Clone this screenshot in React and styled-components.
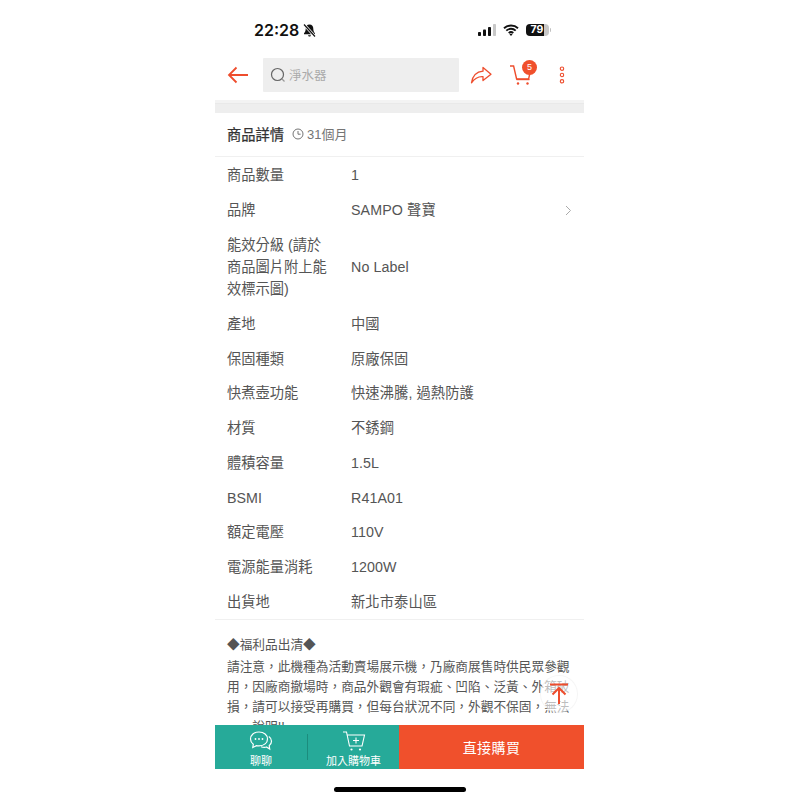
import React from "react";
import styled, { createGlobalStyle } from "styled-components";

const FONT = `"Liberation Sans", "Noto Sans CJK TC", sans-serif`;
const ORANGE = "#ee4d2d";
const RED = "#f0502c";
const TEAL = "#26aa99";

const Global = createGlobalStyle`
  html, body { margin: 0; padding: 0; background: #fff; }
  body { font-family: ${FONT}; }
  * { box-sizing: border-box; }
`;

const Page = styled.div`
  width: 800px;
  height: 800px;
  display: flex;
  justify-content: center;
  overflow: hidden;
`;
const Phone = styled.div`
  position: relative;
  width: 369px;
  margin-left: -1px;
  height: 800px;
  display: flex;
  flex-direction: column;
  background: #fff;
`;
const StatusBar = styled.div`
  height: 50px;
  flex: none;
  display: flex;
  align-items: center;
  justify-content: space-between;
  padding: 10px 33px 0 39px;
`;
const Clock = styled.div`
  display: flex;
  align-items: center;
  gap: 3px;
  font: 600 16px/20px "Inter", "Liberation Sans", sans-serif;
  color: #111;
`;
const StatusIcons = styled.div`
  display: flex;
  align-items: center;
  gap: 7px;
`;
const Battery = styled.div`
  display: flex;
  align-items: center;
  gap: 1px;
`;
const BatteryBody = styled.div`
  width: 23px;
  height: 12.5px;
  border-radius: 4px;
  background: linear-gradient(90deg, #111 79%, #c8c8c8 79%);
  color: #fff;
  font: 700 10.5px/12.5px "Inter", "Liberation Sans", sans-serif;
  text-align: center;
`;
const BatteryCap = styled.div`
  width: 1.5px;
  height: 4px;
  border-radius: 0 1px 1px 0;
  background: #c0c0c0;
`;
const NavBar = styled.div`
  height: 50px;
  flex: none;
  display: flex;
  align-items: center;
  padding-left: 12px;
`;
const IconSlot = styled.div`
  flex: none;
  display: flex;
  align-items: center;
  justify-content: center;
  position: relative;
  width: ${(p) => p.$w}px;
  margin-left: ${(p) => p.$ml || 0}px;
`;
const SearchBox = styled.div`
  width: 196px;
  height: 34px;
  margin-left: 14px;
  background: #eee;
  border-radius: 1px;
  display: flex;
  align-items: center;
  gap: 3px;
  padding: 0 0 2px 7px;
  color: #aaa;
  font-size: 12.5px;
`;
const SearchIcon = styled.svg`
  margin-top: 2px;
`;
const Badge = styled.div`
  position: absolute;
  top: -4px;
  left: 13px;
  width: 15px;
  height: 15px;
  border-radius: 50%;
  background: ${RED};
  color: #fff;
  font: 400 9px/15px "Liberation Sans", sans-serif;
  text-align: center;
`;
const GreyBand = styled.div`
  height: 13px;
  flex: none;
  background: linear-gradient(#f3f3f3 0, #f3f3f3 3px, #e9e9e9 3px, #e9e9e9 4px, #eee 4px);
`;
const Main = styled.div`
  flex: 1;
  min-height: 0;
  overflow: hidden;
`;
const SectionHead = styled.div`
  height: 44px;
  display: flex;
  align-items: center;
  gap: 8px;
  padding: 0 12px 2px;
  border-bottom: 1px solid #f0f0f0;
`;
const SectionTitle = styled.div`
  font-size: 14.25px;
  font-weight: 400;
  -webkit-text-stroke: 0.25px #333;
  color: #333;
`;
const Age = styled.div`
  display: flex;
  align-items: center;
  gap: 3px;
  font-size: 13px;
  color: #757575;
`;
const Specs = styled.div`
  padding-top: 1px;
  border-bottom: 1px solid #f0f0f0;
`;
const SpecRow = styled.div`
  display: grid;
  grid-template-columns: 104px 1fr 14px;
  column-gap: 20px;
  align-items: center;
  padding: 6.4px 12px;
  font-size: 14.25px;
  line-height: 22px;
  color: #555;
`;
const SpecLabel = styled.div``;
const SpecValue = styled.div`
  letter-spacing: 0.1px;
`;
const Chevron = styled.svg`
  justify-self: end;
`;
const Description = styled.div`
  padding: 15px 12px 0;
  font-size: 12.7px;
  line-height: 20px;
  color: #555;
`;
const DescLine = styled.div`
  white-space: nowrap;
  height: 20px;
`;
const DescTitle = styled(DescLine)`
  margin-bottom: 2px;
`;
const BottomBar = styled.div`
  height: 44px;
  flex: none;
  display: flex;
`;
const Teal = styled.div`
  width: 184px;
  background: ${TEAL};
  display: flex;
  align-items: center;
`;
const TealItem = styled.div`
  flex: ${(p) => p.$flex};
  display: flex;
  flex-direction: column;
  align-items: center;
  color: #fff;
  font-size: 11px;
  line-height: 12px;
  gap: 3px;
  padding-top: 3px;
`;
const TealDivider = styled.div`
  width: 1px;
  height: 26px;
  background: #1c8c7d;
`;
const BuyNow = styled.div`
  flex: 1;
  background: ${RED};
  color: #fff;
  display: flex;
  align-items: center;
  justify-content: center;
  font-size: 14px;
  letter-spacing: 0.4px;
`;
const HomeArea = styled.div`
  height: 31px;
  flex: none;
  display: flex;
  justify-content: center;
  padding-top: 18px;
`;
const HomeBar = styled.div`
  width: 132px;
  height: 5px;
  border-radius: 3px;
  background: #000;
`;
const BackTop = styled.div`
  position: absolute;
  left: 325px;
  top: 675px;
  width: 38px;
  height: 38px;
  border-radius: 50%;
  background: rgba(255, 255, 255, 0.62);
  border: 1px solid rgba(0, 0, 0, 0.04);
  display: flex;
  align-items: center;
  justify-content: center;
`;

const rows = [
  ["商品數量", "1"],
  ["品牌", "SAMPO 聲寶", true],
  ["能效分級 (請於商品圖片附上能效標示圖)", "No Label"],
  ["產地", "中國"],
  ["保固種類", "原廠保固"],
  ["快煮壺功能", "快速沸騰, 過熱防護"],
  ["材質", "不銹鋼"],
  ["體積容量", "1.5L"],
  ["BSMI", "R41A01"],
  ["額定電壓", "110V"],
  ["電源能量消耗", "1200W"],
  ["出貨地", "新北市泰山區"],
];

const lines = [
  "請注意，此機種為活動賣場展示機，乃廠商展售時供民眾參觀",
  "用，因廠商撤場時，商品外觀會有瑕疵、凹陷、泛黃、外箱破",
  "損，請可以接受再購買，但每台狀況不同，外觀不保固，無法",
  "一一說明!!",
];

export default function App() {
  return (
    <Page>
      <Global />
      <Phone>
        <StatusBar>
          <Clock>
            22:28
            <svg width="15" height="15" viewBox="0 0 15 15">
              <path d="M7.500 1.500c-2.600 0-3.800 2-3.800 4.200 0 2.300-.8 3.600-1.700 4.600v.9h11v-.9c-.9-1-1.700-2.300-1.700-4.600 0-2.200-1.200-4.200-3.800-4.200z" fill="#111" />
              <path d="M6 12.300c.2.800.8 1.200 1.500 1.200s1.300-.4 1.500-1.200z" fill="#111" />
              <path d="M2 1.500l11 12" stroke="#fff" strokeWidth="2.600" />
              <path d="M2 1.500l11 12" stroke="#111" strokeWidth="1.200" />
            </svg>
          </Clock>
          <StatusIcons>
            <svg width="18" height="12" viewBox="0 0 18 12">
              <rect x="0" y="8" width="3" height="4" rx=".8" fill="#111" />
              <rect x="5" y="5.500" width="3" height="6.500" rx=".8" fill="#111" />
              <rect x="10" y="3" width="3" height="9" rx=".8" fill="#111" />
              <rect x="15" y="0" width="3" height="12" rx=".8" fill="#c8c8c8" />
            </svg>
            <svg width="16" height="12" viewBox="0 0 16 12">
              <path d="M1 4.200C4.800.6 11.200.6 15 4.200M3.300 6.600c2.600-2.400 6.800-2.400 9.400 0M5.700 9c1.300-1.100 3.300-1.100 4.600 0" fill="none" stroke="#111" strokeWidth="1.900" />
              <path d="M8 12l-1.500-1.800c.9-.6 2.100-.6 3 0z" fill="#111" />
            </svg>
            <Battery>
              <BatteryBody>79</BatteryBody>
              <BatteryCap />
            </Battery>
          </StatusIcons>
        </StatusBar>

        <NavBar>
          <IconSlot $w={22}>
            <svg width="22" height="18" viewBox="0 0 22 18">
              <path d="M21 9H2M9.500 1.500L2 9l7.500 7.500" fill="none" stroke={ORANGE} strokeWidth="1.800" />
            </svg>
          </IconSlot>
          <SearchBox>
            <SearchIcon width="16" height="16" viewBox="0 0 16 16">
              <circle cx="7.500" cy="7.500" r="6" fill="none" stroke="#666" strokeWidth="1.200" />
              <path d="M12 12l2.500 2.500" stroke="#999" strokeWidth="1.200" />
            </SearchIcon>
            淨水器
          </SearchBox>
          <IconSlot $w={22} $ml={11}>
            <svg width="22" height="18" viewBox="0 0 22 18">
              <path d="M13 1.500L21 8.200 13 14.500V10.600C8 10.200 4.500 12.500 1.500 16.800 2.500 10 6.500 5.800 13 5.200z" fill="none" stroke={ORANGE} strokeWidth="1.300" strokeLinejoin="round" />
            </svg>
          </IconSlot>
          <IconSlot $w={24} $ml={17}>
            <svg width="24" height="22" viewBox="0 0 24 22">
              <path d="M1 2h3.600l3 13h12l2-9" fill="none" stroke={ORANGE} strokeWidth="1.400" />
              <path d="M7.500 15.500h13" stroke={ORANGE} strokeWidth="1.400" />
              <circle cx="9" cy="19.500" r="1.200" fill={ORANGE} />
              <circle cx="18.500" cy="19.500" r="1.200" fill={ORANGE} />
            </svg>
            <Badge>5</Badge>
          </IconSlot>
          <IconSlot $w={6} $ml={26}>
            <svg width="6" height="18" viewBox="0 0 6 18">
              <circle cx="3" cy="2.700" r="1.700" fill="none" stroke={ORANGE} strokeWidth="1.100" />
              <circle cx="3" cy="9" r="1.700" fill="none" stroke={ORANGE} strokeWidth="1.100" />
              <circle cx="3" cy="15.300" r="1.700" fill="none" stroke={ORANGE} strokeWidth="1.100" />
            </svg>
          </IconSlot>
        </NavBar>

        <GreyBand />

        <Main>
          <SectionHead>
            <SectionTitle>商品詳情</SectionTitle>
            <Age>
              <svg width="12" height="12" viewBox="0 0 12 12">
                <circle cx="6" cy="6" r="5" fill="none" stroke="#757575" />
                <path d="M6 3v3.200h2.600" fill="none" stroke="#757575" />
              </svg>
              31個月
            </Age>
          </SectionHead>
          <Specs>
            {rows.map(([k, v, link]) => (
              <SpecRow key={k}>
                <SpecLabel>{k}</SpecLabel>
                <SpecValue>{v}</SpecValue>
                {link && (
                  <Chevron width="7" height="11" viewBox="0 0 7 11">
                    <path d="M1 1l4.500 4.500L1 10" fill="none" stroke="#aaa" />
                  </Chevron>
                )}
              </SpecRow>
            ))}
          </Specs>
          <Description>
            <DescTitle>◆福利品出清◆</DescTitle>
            {lines.map((l) => (
              <DescLine key={l}>{l}</DescLine>
            ))}
          </Description>
        </Main>

        <BottomBar>
          <Teal>
            <TealItem $flex="0 0 92px">
              <svg width="24" height="21" viewBox="0 0 24 21">
                <path d="M10 1C5 1 1.500 4 1.500 8c0 2.200 1.100 4 2.800 5.300L3.800 16.500l3.600-1.900c.8.200 1.700.3 2.600.3 5 0 8.500-3 8.500-7S15 1 10 1z" fill="none" stroke="#fff" strokeWidth="1.200" />
                <path d="M19.800 5.500c1.700 1.100 2.700 2.800 2.700 4.700 0 1.800-.9 3.300-2.300 4.400l.5 3.400-3.300-2c-1.500.5-3.700.3-5.400-.3" fill="none" stroke="#fff" strokeWidth="1.200" />
                <circle cx="6.500" cy="8" r=".9" fill="#fff" />
                <circle cx="10" cy="8" r=".9" fill="#fff" />
                <circle cx="13.500" cy="8" r=".9" fill="#fff" />
              </svg>
              聊聊
            </TealItem>
            <TealDivider />
            <TealItem $flex="1">
              <svg width="24" height="21" viewBox="0 0 24 21">
                <path d="M1 1h3.500l3 14h12.500l2.500-11H5.500" fill="none" stroke="#fff" strokeWidth="1.100" />
                <path d="M14 6.500v6M11 9.500h6" stroke="#fff" strokeWidth="1.100" />
                <circle cx="9.500" cy="18.500" r="1.100" fill="#fff" />
                <circle cx="18" cy="18.500" r="1.100" fill="#fff" />
              </svg>
              加入購物車
            </TealItem>
          </Teal>
          <BuyNow>直接購買</BuyNow>
        </BottomBar>

        <HomeArea>
          <HomeBar />
        </HomeArea>

        <BackTop>
          <svg width="20" height="22" viewBox="0 0 20 22">
            <path d="M1 1.500h18M10 21V6M3.500 11.500L10 5l6.500 6.500" fill="none" stroke={ORANGE} strokeWidth="2" />
          </svg>
        </BackTop>
      </Phone>
    </Page>
  );
}
